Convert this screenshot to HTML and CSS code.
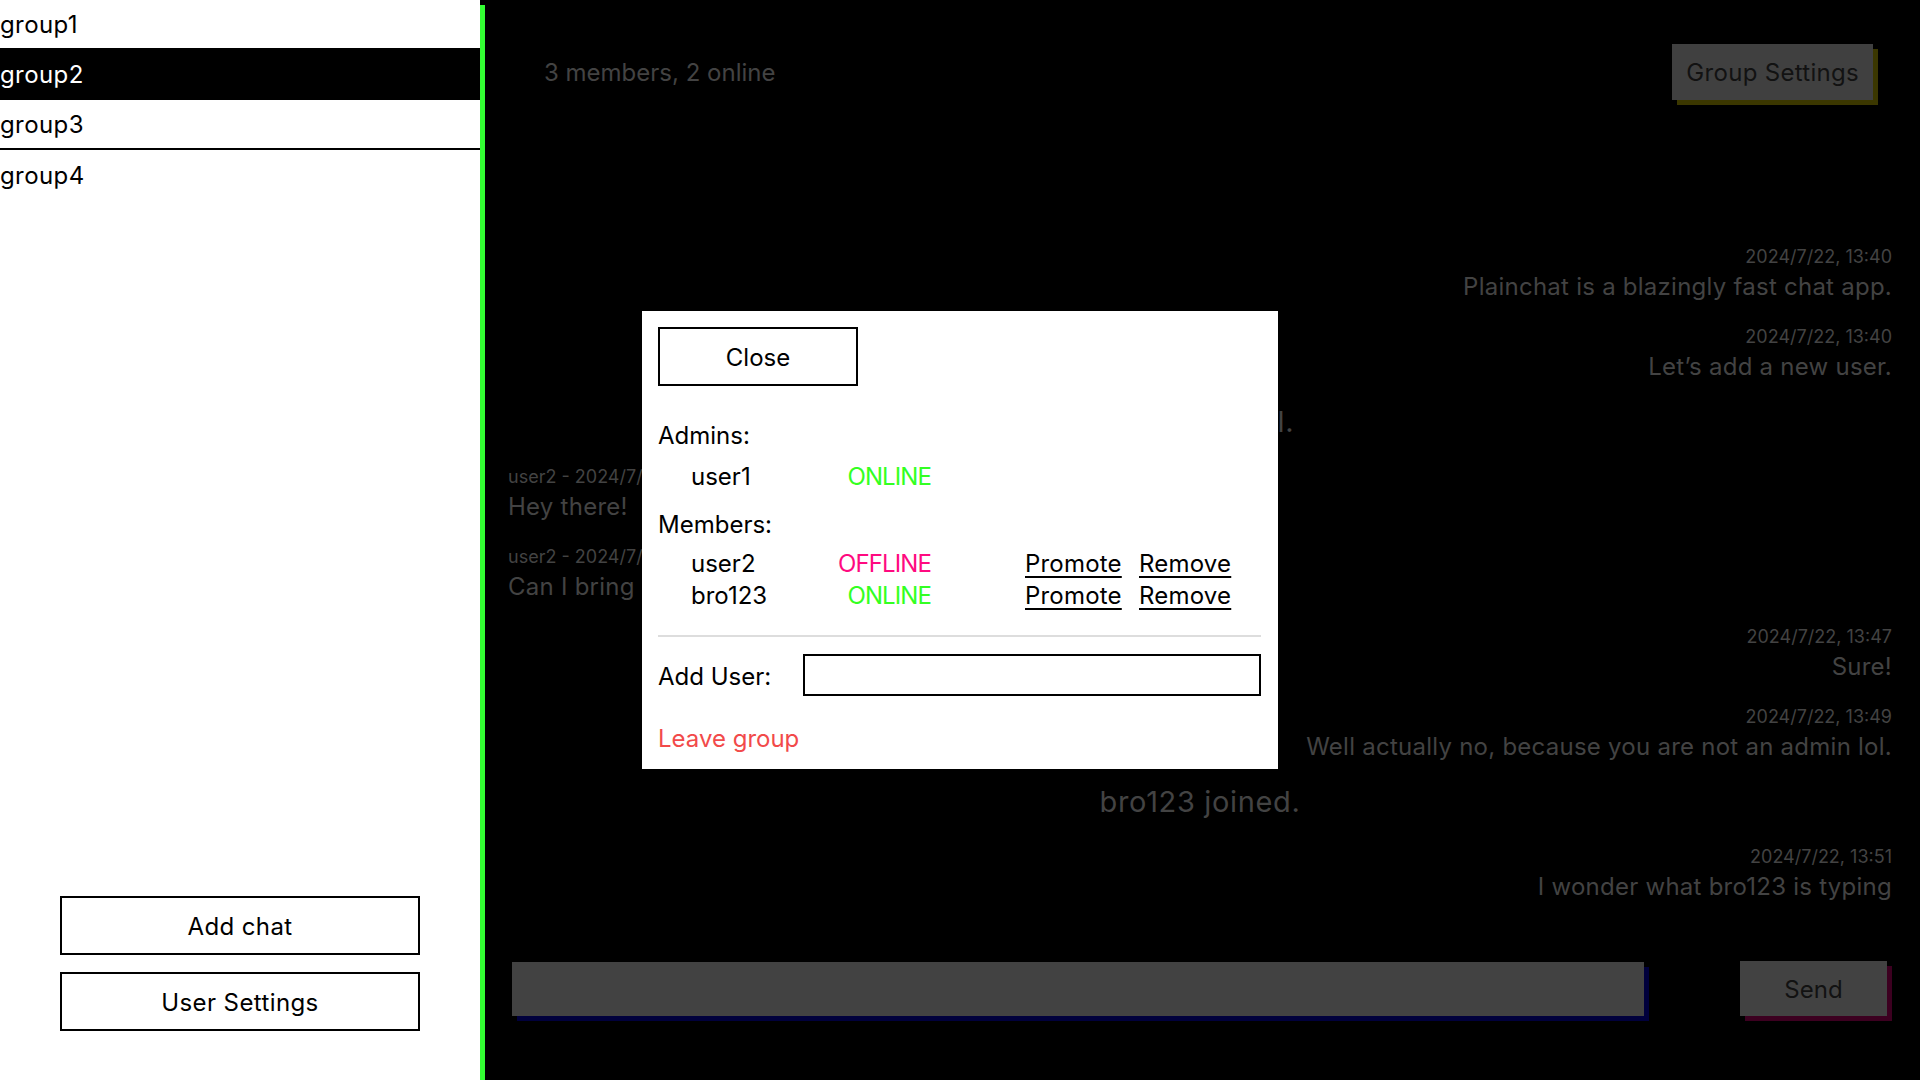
FILE: index.html
```html
<!DOCTYPE html>
<html lang="en">
<head>
<meta charset="utf-8">
<title>Plainchat</title>
<link rel="stylesheet" href="styles.css">
</head>
<body>
<div class="app">
  <aside class="sidebar">
    <ul class="groups">
      <li class="group first">group1</li>
      <li class="group active">group2</li>
      <li class="group hovered">group3</li>
      <li class="group">group4</li>
    </ul>
    <div class="side-actions">
      <button class="side-btn">Add chat</button>
      <button class="side-btn">User Settings</button>
    </div>
  </aside>
  <div class="rule"></div>
  <main class="chat">
    <header class="chat-header">
      <span class="members">3 members, 2 online</span>
      <button class="group-settings">Group Settings</button>
    </header>
    <div class="messages">
      <div class="msg mine">
        <div class="meta">2024/7/22, 13:40</div>
        <div class="body">Plainchat is a blazingly fast chat app.</div>
      </div>
      <div class="msg mine">
        <div class="meta">2024/7/22, 13:40</div>
        <div class="body">Let’s add a new user.</div>
      </div>
      <div class="system">Keep all civil.</div>
      <div class="msg theirs">
        <div class="meta">user2 - 2024/7/22, 13:45</div>
        <div class="body">Hey there!</div>
      </div>
      <div class="msg theirs">
        <div class="meta">user2 - 2024/7/22, 13:46</div>
        <div class="body">Can I bring my friend bro123 here?</div>
      </div>
      <div class="msg mine">
        <div class="meta">2024/7/22, 13:47</div>
        <div class="body">Sure!</div>
      </div>
      <div class="msg mine">
        <div class="meta">2024/7/22, 13:49</div>
        <div class="body">Well actually no, because you are not an admin lol.</div>
      </div>
      <div class="system">bro123 joined.</div>
      <div class="msg mine">
        <div class="meta">2024/7/22, 13:51</div>
        <div class="body">I wonder what bro123 is typing</div>
      </div>
    </div>
    <form class="composer">
      <input class="composer-input" type="text">
      <button class="send" type="button">Send</button>
    </form>
  </main>
</div>

<div class="modal">
  <button class="close-btn">Close</button>
  <div class="section-title admins-title">Admins:</div>
  <div class="member-row admin-row">
    <span class="name">user1</span>
    <span class="status online">ONLINE</span>
  </div>
  <div class="section-title members-title">Members:</div>
  <div class="member-list">
    <div class="member-row">
      <span class="name">user2</span>
      <span class="status offline">OFFLINE</span>
      <a class="action promote" href="#">Promote</a>
      <a class="action" href="#">Remove</a>
    </div>
    <div class="member-row">
      <span class="name">bro123</span>
      <span class="status online">ONLINE</span>
      <a class="action promote" href="#">Promote</a>
      <a class="action" href="#">Remove</a>
    </div>
  </div>
  <hr class="divider">
  <div class="add-user">
    <label class="add-label">Add User:</label>
    <input class="add-input" type="text">
  </div>
  <a class="leave" href="#">Leave group</a>
</div>
</body>
</html>
```

FILE: styles.css
```css
* { box-sizing: border-box; }
html, body { margin: 0; padding: 0; height: 100%; }
body {
  font-family: Inter, "Liberation Sans", sans-serif;
  font-size: 24px;
  background: #000;
  color: #000;
  overflow: hidden;
}
.app {
  display: flex;
  height: 1080px;
}
.sidebar {
  width: 480px;
  flex: none;
  background: #fff;
  display: flex;
  flex-direction: column;
}
.rule {
  width: 5px;
  flex: none;
  margin-top: 5px;
  background: #33ff33;
}
.groups {
  list-style: none;
  margin: 0;
  padding: 0;
  flex: 1;
}
.group {
  height: 50px;
  padding-top: 2px;
  line-height: 48px;
  letter-spacing: 0.4px;
}
.group.first { height: 48px; line-height: 46px; }
.group.active { background: #000; color: #fff; height: 52px; line-height: 50px; }
.group.hovered { border-bottom: 2px solid #000; height: 50px; line-height: 46px; }
.side-actions {
  display: flex;
  flex-direction: column;
  align-items: center;
  gap: 17px;
  padding-bottom: 49px;
}
.side-btn {
  width: 360px;
  height: 59px;
  padding-top: 3px;
  background: #fff;
  border: 2px solid #000;
  font: inherit;
  letter-spacing: 0.4px;
  color: #000;
}
.chat {
  flex: 1;
  display: flex;
  flex-direction: column;
  min-width: 0;
}
.chat-header {
  display: flex;
  align-items: center;
  justify-content: space-between;
  padding: 44px 47px 44px 59px;
}
.members { color: #434343; }
.group-settings {
  height: 56px;
  padding: 0 14px;
  background: #404040;
  color: #121212;
  border: none;
  box-shadow: 5px 5px 0 #3b3700;
  font: inherit;
  letter-spacing: 0.3px;
}
.messages {
  flex: 1;
  display: flex;
  flex-direction: column;
  justify-content: flex-end;
  gap: 20px;
  padding: 0 28px 20px 23px;
  color: #434343;
}
.msg { display: flex; flex-direction: column; }
.msg.mine { align-items: flex-end; text-align: right; }
.msg.theirs { align-items: flex-start; }
.meta { font-size: 18px; line-height: 26px; }
.body { font-size: 24px; line-height: 34px; letter-spacing: 0.25px; }
.system {
  text-align: center;
  font-size: 29px;
  line-height: 36px;
  padding-bottom: 4px;
  letter-spacing: 0.65px;
}
.composer {
  display: flex;
  align-items: center;
  gap: 96px;
  padding: 37px 33px 64px 27px;
  margin: 0;
}
.composer-input {
  flex: 1;
  height: 54px;
  background: #424242;
  border: none;
  box-shadow: 5px 5px 0 #00003c;
  font: inherit;
}
.send {
  width: 147px;
  height: 55px;
  padding-top: 2px;
  background: #424242;
  border: none;
  color: #121212;
  box-shadow: 5px 5px 0 #3c0020;
  font: inherit;
}

/* Modal */
.modal {
  position: fixed;
  left: 50%;
  top: 50%;
  transform: translate(-50%, -50%);
  width: 636px;
  background: #fff;
  padding: 16px 17px 14px 16px;
  display: flex;
  flex-direction: column;
  align-items: flex-start;
}
.close-btn {
  width: 200px;
  height: 59px;
  padding-top: 2px;
  background: #fff;
  border: 2px solid #000;
  font: inherit;
  color: #000;
}
.section-title { line-height: 32px; padding-top: 1px; }
.admins-title { margin-top: 33px; }
.members-title { margin-top: 15px; }
.member-list { margin-top: 7px; }
.member-row {
  display: grid;
  grid-template-columns: 140px 100px 94px 114px auto;
  padding-left: 33px;
  line-height: 32px;
}
.admin-row { margin-top: 8px; padding-top: 1px; }
.status { text-align: right; letter-spacing: -0.9px; }
.online { color: #33ff22; }
.offline { color: #ff0a80; }
.action { color: #000; text-decoration: underline; text-underline-offset: 4px; letter-spacing: 0.2px; }
.promote { grid-column: 4; }
.divider {
  align-self: stretch;
  border: none;
  height: 2px;
  background: #dddddd;
  margin: 23px 0 0;
}
.add-user {
  align-self: stretch;
  display: flex;
  align-items: center;
  margin-top: 17px;
}
.add-label { width: 145px; flex: none; padding-top: 2px; }
.add-input {
  flex: 1;
  height: 42px;
  border: 2px solid #000;
  background: #fff;
  font: inherit;
}
.leave {
  margin-top: 26px;
  line-height: 32px;
  padding-top: 1px;
  color: #f24a4a;
  text-decoration: none;
}
```
